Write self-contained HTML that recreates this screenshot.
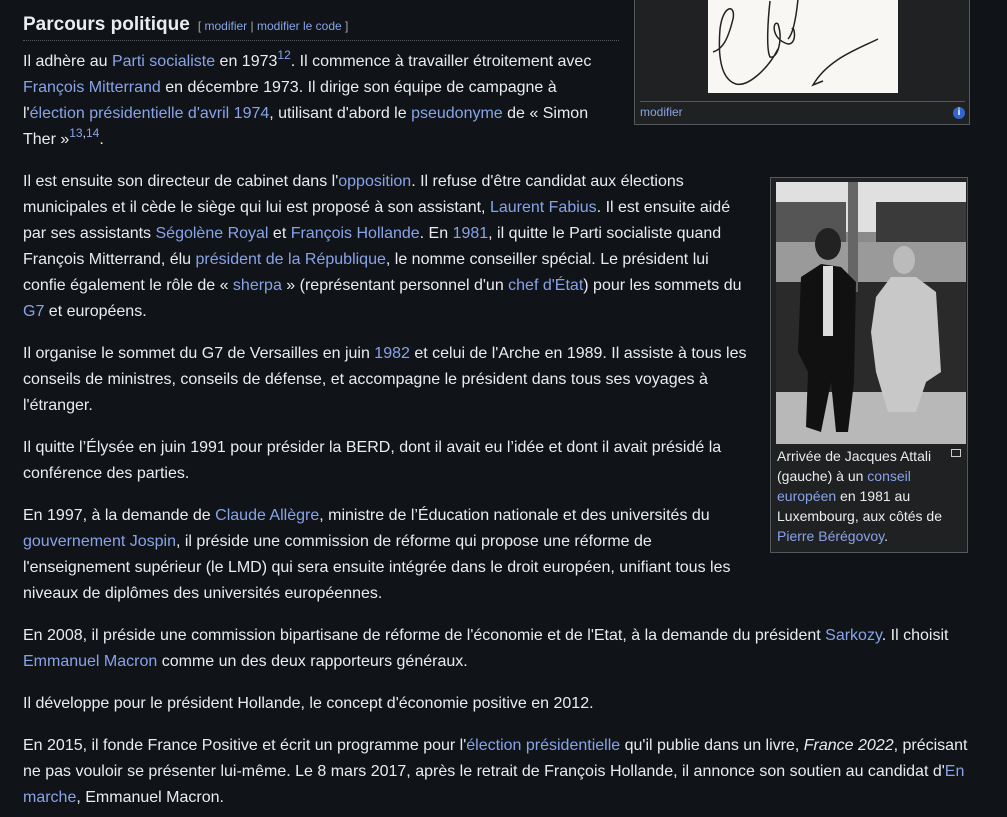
<!DOCTYPE html>
<html><head><meta charset="utf-8"><style>
html,body{margin:0;padding:0;background:#101418;width:1007px;height:817px;overflow:hidden}
body{font-family:"Liberation Sans",Arial,sans-serif;color:#eaecf0;font-size:16px;position:relative}
a{color:#88a3e8;text-decoration:none}
.c{position:absolute;left:23px;top:49px;width:962px;line-height:26px}
p{margin:0 0 16px 0}
.w1{width:588px}
.w2{width:732px}
sup{font-size:12px;line-height:0;vertical-align:7px}
h2{position:absolute;left:23px;top:11px;width:596px;margin:0;font-size:19px;font-weight:bold;border-bottom:1px dotted #54595d;height:29px;line-height:28px}
h2 span{font-size:12px;font-weight:normal;color:#a2a9b1;margin-left:8px}
.sig{position:absolute;left:634px;top:-2px;width:334px;height:125px;background:#202122;border:1px solid #54595d}
.sigimg{position:absolute;left:73px;top:0;width:190px;height:94px;background:#f8f7f4}
.thumb{position:absolute;left:770px;top:177px;width:196px;height:374px;background:#202122;border:1px solid #54595d}
.photo{position:absolute;left:5px;top:4px;width:190px;height:262px;background:#777}
.cap{position:absolute;left:6px;top:268px;width:188px;font-size:14px;line-height:20px;color:#eaecf0}
</style></head><body>
<h2>Parcours politique<span>[ <a>modifier</a> | <a>modifier le code</a> ]</span></h2>
<div class="sig">
<div class="sigimg"><svg width="190" height="94" viewBox="0 0 190 94"><g fill="none" stroke="#222" stroke-width="1.5"><path d="M5 53 C15 50 20 40 25 20 C28 5 15 5 12 30 C10 55 12 80 28 85 C40 88 60 70 70 50 M62 2 C60 20 58 50 62 58 C70 60 75 40 70 25 C65 20 62 40 80 45 C90 45 86 25 84 30 M90 0 C88 20 85 35 80 40 M170 40 C150 50 120 60 105 86 L115 82"/></g></svg></div>
<div style="position:absolute;left:5px;top:102px;width:325px;border-top:1px solid #54595d"></div>
<div style="position:absolute;left:5px;top:106px;font-size:12px;color:#88a3e8">modifier</div>
<div style="position:absolute;left:318px;top:108px;width:12px;height:12px;border-radius:50%;background:#36c;color:#fff;font-size:10px;font-weight:bold;line-height:12px;text-align:center">i</div>
</div>
<div class="thumb"><div class="photo"><svg width="190" height="262" viewBox="0 0 190 262">
<rect width="190" height="262" fill="#8a8a8a"/>
<rect width="190" height="50" fill="#e0e0e0"/>
<rect x="0" y="20" width="70" height="40" fill="#555"/>
<rect x="100" y="20" width="90" height="70" fill="#3a3a3a"/>
<rect x="0" y="60" width="190" height="40" fill="#9a9a9a"/>
<rect x="0" y="100" width="190" height="110" fill="#2a2a2a"/>
<rect x="0" y="210" width="190" height="52" fill="#b8b8b8"/>
<rect x="72" y="0" width="10" height="110" fill="#666"/>
<ellipse cx="52" cy="62" rx="13" ry="16" fill="#222"/>
<path d="M25 95 L45 82 L65 85 L80 100 L78 200 L72 250 L60 250 L55 200 L45 250 L30 245 L32 190 L22 170 Z" fill="#111"/>
<rect x="47" y="84" width="10" height="70" fill="#ddd"/>
<ellipse cx="128" cy="78" rx="11" ry="14" fill="#bbb"/>
<path d="M100 115 L115 95 L140 95 L160 110 L165 190 L150 200 L140 230 L112 230 L100 190 L95 150 Z" fill="#c8c8c8"/>
</svg></div>
<div style="position:absolute;left:180px;top:271px;width:8px;height:6px;border:1px solid #ccc"></div>
<div class="cap">Arrivée de Jacques Attali (gauche) à un <a>conseil européen</a> en 1981 au Luxembourg, aux côtés de <a>Pierre Bérégovoy</a>.</div></div>
<div class="c">
<p class="w1">Il adhère au <a>Parti socialiste</a> en 1973<sup><a>12</a></sup>. Il commence à travailler étroitement avec <a>François Mitterrand</a> en décembre 1973. Il dirige son équipe de campagne à l'<a>élection présidentielle d'avril 1974</a>, utilisant d'abord le <a>pseudonyme</a> de « Simon Ther »<sup><a>13</a>,<a>14</a></sup>.</p>
<p class="w2">Il est ensuite son directeur de cabinet dans l'<a>opposition</a>. Il refuse d'être candidat aux élections municipales et il cède le siège qui lui est proposé à son assistant, <a>Laurent Fabius</a>. Il est ensuite aidé par ses assistants <a>Ségolène Royal</a> et <a>François Hollande</a>. En <a>1981</a>, il quitte le Parti socialiste quand François Mitterrand, élu <a>président de la République</a>, le nomme conseiller spécial. Le président lui confie également le rôle de « <a>sherpa</a> » (représentant personnel d'un <a>chef d'État</a>) pour les sommets du <a>G7</a> et européens.</p>
<p class="w2">Il organise le sommet du G7 de Versailles en juin <a>1982</a> et celui de l'Arche en 1989. Il assiste à tous les conseils de ministres, conseils de défense, et accompagne le président dans tous ses voyages à l'étranger.</p>
<p class="w2">Il quitte l’Élysée en juin 1991 pour présider la BERD, dont il avait eu l’idée et dont il avait présidé la conférence des parties.</p>
<p class="w2">En 1997, à la demande de <a>Claude Allègre</a>, ministre de l’Éducation nationale et des universités du <a>gouvernement Jospin</a>, il préside une commission de réforme qui propose une réforme de l'enseignement supérieur (le LMD) qui sera ensuite intégrée dans le droit européen, unifiant tous les niveaux de diplômes des universités européennes.</p>
<p>En 2008, il préside une commission bipartisane de réforme de l'économie et de l'Etat, à la demande du président <a>Sarkozy</a>. Il choisit <a>Emmanuel Macron</a> comme un des deux rapporteurs généraux.</p>
<p>Il développe pour le président Hollande, le concept d'économie positive en 2012.</p>
<p>En 2015, il fonde France Positive et écrit un programme pour l'<a>élection présidentielle</a> qu'il publie dans un livre, <i>France 2022</i>, précisant ne pas vouloir se présenter lui-même. Le 8 mars 2017, après le retrait de François Hollande, il annonce son soutien au candidat d'<a>En marche</a>, Emmanuel Macron.</p>
</div>
</body></html>
